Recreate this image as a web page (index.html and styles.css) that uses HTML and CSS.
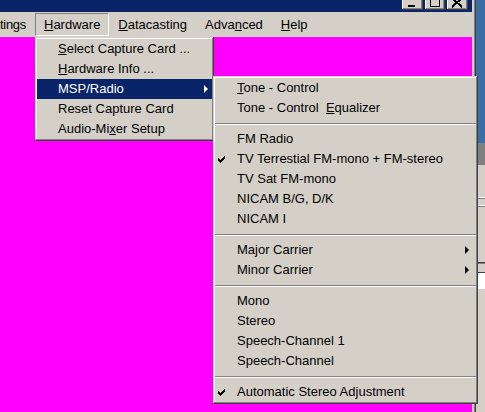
FILE: index.html
```html
<!DOCTYPE html>
<html>
<head>
<meta charset="utf-8">
<link rel="stylesheet" href="styles.css">
</head>
<body>
<div class="desktop">
  <div class="window">
    <div class="titlebar">
      <div class="caption">
        <span class="cbtn"><svg width="21" height="14" viewBox="0 0 21 14" shape-rendering="crispEdges"><rect x="6" y="9" width="7" height="2" fill="#000"/></svg></span>
        <span class="cbtn cbtn-max"><svg width="20" height="14" viewBox="0 0 20 14" shape-rendering="crispEdges"><path d="M5 1h10v10h-10z M6 3v7h8v-7z" fill="#000" fill-rule="evenodd"/></svg></span>
        <span class="cbtn cbtn-close"><svg width="21" height="14" viewBox="0 0 21 14" shape-rendering="crispEdges"><path d="M5 2l10 9M15 2l-10 9" stroke="#000" stroke-width="2"/></svg></span>
      </div>
    </div>
    <div class="menubar">
      <span class="mb-item mb-first">tings</span>
      <span class="mb-item mb-pressed"><u>H</u>ardware</span>
      <span class="mb-item"><u>D</u>atacasting</span>
      <span class="mb-item">Adva<u>n</u>ced</span>
      <span class="mb-item"><u>H</u>elp</span>
    </div>
    <div class="client"></div>
  </div>

  <div class="bgwin">
    <div class="bgwin-title"></div>
    <div class="bgwin-body">
      <div class="bgline bgline-a"></div>
      <div class="bgline bgline-b"></div>
      <div class="bgline bgline-c"></div>
      <div class="bgbox"></div>
    </div>
  </div>

  <div class="menu menu-hw">
    <div class="mi"><u>S</u>elect Capture Card ...</div>
    <div class="mi"><u>H</u>ardware Info ...</div>
    <div class="mi mi-active">MSP/Radio<span class="arrow"></span></div>
    <div class="mi">Reset Capture Card</div>
    <div class="mi">Audio-Mi<u>x</u>er Setup</div>
  </div>

  <div class="menu menu-sub">
    <div class="mi"><u>T</u>one - Control</div>
    <div class="mi">Tone - Control&nbsp; <u>E</u>qualizer</div>
    <div class="sep"></div>
    <div class="mi">FM Radio</div>
    <div class="mi"><svg class="check" width="7" height="7" viewBox="0 0 7 7" shape-rendering="crispEdges"><path d="M6 0h1v1h-1z M5 1h2v1h-2z M0 2h1v1h-1z M4 2h3v1h-3z M0 3h2v1h-2z M3 3h3v1h-3z M0 4h5v1h-5z M1 5h3v1h-3z M2 6h1v1h-1z" fill="#000"/></svg>TV Terrestial FM-mono + FM-stereo</div>
    <div class="mi">TV Sat FM-mono</div>
    <div class="mi">NICAM B/G, D/K</div>
    <div class="mi">NICAM I</div>
    <div class="sep"></div>
    <div class="mi">Major Carrier<span class="arrow"></span></div>
    <div class="mi">Minor Carrier<span class="arrow"></span></div>
    <div class="sep"></div>
    <div class="mi">Mono</div>
    <div class="mi">Stereo</div>
    <div class="mi">Speech-Channel 1</div>
    <div class="mi">Speech-Channel</div>
    <div class="sep"></div>
    <div class="mi"><svg class="check" width="7" height="7" viewBox="0 0 7 7" shape-rendering="crispEdges"><path d="M6 0h1v1h-1z M5 1h2v1h-2z M0 2h1v1h-1z M4 2h3v1h-3z M0 3h2v1h-2z M3 3h3v1h-3z M0 4h5v1h-5z M1 5h3v1h-3z M2 6h1v1h-1z" fill="#000"/></svg>Automatic Stereo Adjustment</div>
  </div>
</div>
</body>
</html>
```
FILE: styles.css
```css
html, body {
  margin: 0;
  padding: 0;
}
body {
  width: 485px;
  height: 412px;
  overflow: hidden;
  font-family: "Liberation Sans", Arial, sans-serif;
  font-size: 13px;
  color: #000;
}
.desktop {
  position: relative;
  width: 485px;
  height: 412px;
  background: #3a6ea5;
  overflow: hidden;
}
.window {
  display: flex;
  flex-direction: column;
  width: 472px;
  height: 412px;
  background: #d4d0c8;
  padding-right: 3px;
  border-right: 1px solid #404040;
  box-shadow: inset -1px 0 #808080;
}
.titlebar {
  height: 12px;
  background: #0a246a;
  display: flex;
  justify-content: flex-end;
  align-items: flex-end;
  padding-right: 4px;
  padding-bottom: 2px;
  box-sizing: border-box;
  overflow: hidden;
  flex: none;
}
.caption {
  display: flex;
  gap: 2px;
  align-items: flex-end;
}
.cbtn {
  display: block;
  width: 21px;
  height: 14px;
  flex: none;
  background: #d4d0c8;
  box-shadow: inset -1px -1px #404040, inset 1px 1px #fff, inset -2px -2px #808080;
}
.cbtn-max {
  width: 20px;
}
.cbtn svg {
  display: block;
}
.menubar {
  height: 25px;
  box-sizing: border-box;
  padding-top: 1px;
  display: flex;
  align-items: flex-start;
  flex: none;
  white-space: nowrap;
}
.mb-item {
  display: block;
  height: 23px;
  line-height: 21px;
  padding: 0 8px;
  border: 1px solid transparent;
  box-sizing: border-box;
}
.mb-first {
  padding: 0;
  border: 0;
  width: 35px;
  line-height: 23px;
  letter-spacing: -0.3px;
}
.mb-pressed {
  border-color: #808080 #fff #fff #808080;
}
.client {
  flex: 1;
  background: #ff00ff;
}
.bgwin {
  position: absolute;
  left: 476px;
  top: 143px;
  width: 12px;
  height: 269px;
  display: flex;
  flex-direction: column;
}
.bgwin-title {
  height: 22px;
  background: #808080;
  flex: none;
}
.bgwin-body {
  flex: 1;
  background: #d4d0c8;
  display: flex;
  flex-direction: column;
  padding-top: 32px;
}
.bgline {
  height: 1px;
  background: #fff;
  border-bottom: 1px solid #808080;
}
.bgline-b {
  margin-top: 6px;
}
.bgline-c {
  margin-top: 55px;
  background: #404040;
}
.bgbox {
  margin-top: 8px;
  height: 16px;
  background: #fff;
  border-top: 1px solid #404040;
}
.menu {
  position: absolute;
  background: #d4d0c8;
  box-sizing: border-box;
  padding: 2px;
  box-shadow: inset -1px -1px #404040, inset 1px 1px #d4d0c8, inset -2px -2px #808080, inset 2px 2px #fff;
  white-space: nowrap;
}
.menu-hw {
  left: 35px;
  top: 37px;
  width: 179px;
  height: 104px;
}
.menu-hw .mi {
  padding-left: 21px;
}
.menu-sub {
  left: 213px;
  top: 76px;
  width: 265px;
  height: 328px;
}
.menu-sub .mi {
  padding-left: 22px;
}
.mi {
  position: relative;
  height: 20px;
  line-height: 20px;
}
.mi-active {
  background: #0a246a;
  color: #fff;
}
.arrow {
  position: absolute;
  right: 7px;
  top: 6px;
  width: 0;
  height: 0;
  border-left: 4px solid #000;
  border-top: 4px solid transparent;
  border-bottom: 4px solid transparent;
}
.menu-hw .arrow {
  right: 4px;
}
.mi-active .arrow {
  border-left-color: #fff;
}
.check {
  position: absolute;
  left: 3px;
  top: 7px;
}
.sep {
  height: 11px;
  position: relative;
}
.sep::after {
  content: "";
  position: absolute;
  left: 0;
  right: 0;
  top: 5px;
  height: 1px;
  background: #808080;
  border-bottom: 1px solid #fff;
}
```
